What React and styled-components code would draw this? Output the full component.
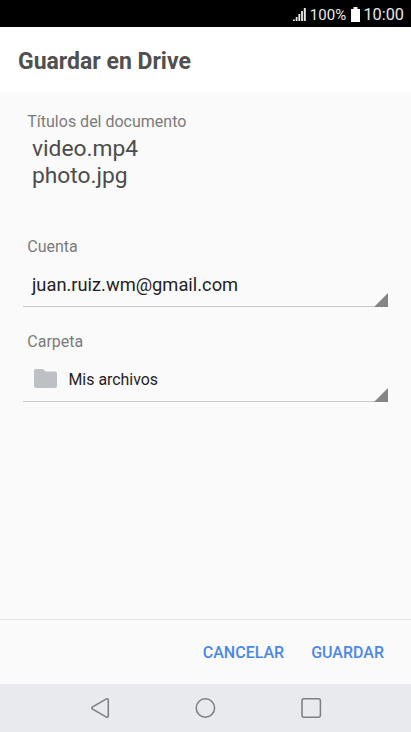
import React from "react";
import styled, { createGlobalStyle } from "styled-components";

const GlobalStyle = createGlobalStyle`
  * {
    box-sizing: border-box;
  }

  body {
    margin: 0;
    font-family: Roboto, "Liberation Sans", sans-serif;
  }
`;

const Layout = styled.div`
  display: flex;
  flex-direction: column;
  width: 100%;
  height: 100vh;
  overflow: hidden;
  background-color: #fafafa;
`;

const StatusBar = styled.div`
  display: flex;
  flex: none;
  align-items: center;
  justify-content: flex-end;
  height: 27px;
  padding: 2px 7px 0 0;
  background-color: #000;
  color: #e8e8e8;
  white-space: nowrap;

  svg {
    margin-bottom: 1px;
  }
`;

const BatteryText = styled.span`
  margin: 0 4.5px 0 3px;
  font-size: 15px;
  letter-spacing: 0.1px;
`;

const Clock = styled.span`
  margin-left: 3.5px;
  font-size: 16.3px;
`;

const Header = styled.header`
  display: flex;
  flex: none;
  align-items: center;
  height: 65px;
  padding: 4px 18px 0;
  background-color: #fff;
`;

const Title = styled.h1`
  margin: 0;
  font-size: 23px;
  font-weight: 700;
  line-height: 28px;
  color: #505050;
  white-space: nowrap;
`;

const Form = styled.main`
  flex: 1;
  padding: 20px 23px 0;
`;

const Field = styled.section`
  margin-bottom: ${(props) => props.$gap || "25px"};
`;

const Label = styled.div`
  height: 20px;
  padding-left: 4.3px;
  font-size: 16px;
  line-height: 20px;
  color: #7b7b7b;
`;

const FileList = styled.div`
  padding: 3px 0 0 9px;
  font-size: 22.8px;
  line-height: 27px;
  color: #4c4c4c;
`;

const Select = styled.div`
  display: flex;
  align-items: flex-end;
  justify-content: space-between;
  height: 50px;
  border-bottom: 1px solid #cacaca;
`;

const SelectValue = styled.div`
  display: flex;
  align-items: center;
  height: 44px;
  padding-left: ${(props) => props.$indent || "9px"};
  font-size: ${(props) => props.$size || "18.3px"};
  color: #232323;

  svg {
    margin: 0 11.5px 1px 0;
  }
`;

const Corner = styled.div`
  width: 14px;
  height: 14px;
  margin-bottom: -1px;
  background-color: #858585;
  clip-path: polygon(100% 0, 100% 100%, 0 100%);
`;

const Actions = styled.footer`
  display: flex;
  flex: none;
  align-items: center;
  justify-content: flex-end;
  gap: 27px;
  height: 65px;
  padding: 0 27px 0 0;
  border-top: 1px solid #e6e6e6;
`;

const ActionButton = styled.button`
  padding: 0;
  border: none;
  background-color: transparent;
  font-family: inherit;
  font-size: 16px;
  font-weight: 500;
  color: #4a88e8;
  cursor: pointer;
`;

const NavBar = styled.nav`
  display: flex;
  flex: none;
  align-items: center;
  justify-content: center;
  gap: 84px;
  height: 48px;
  padding-right: 1px;
  background-color: #e9eaed;
`;

const NavIcon = styled.svg`
  width: 22px;
  height: 22px;
  fill: none;
  stroke: #7d7e81;
  stroke-width: 1.5;
  stroke-linejoin: round;
`;

const SignalIcon = () => (
  <svg width="14" height="14" viewBox="0 0 14 14" fill="#e8e8e8">
    <rect x="0" y="12.5" width="1.8" height="1.5" />
    <rect x="2.7" y="10" width="1.8" height="4" />
    <rect x="5.4" y="7" width="1.8" height="7" />
    <rect x="8.1" y="4" width="1.8" height="10" />
    <rect x="10.8" y="1" width="2" height="13" />
  </svg>
);

const BatteryIcon = () => (
  <svg width="9" height="15" viewBox="0 0 9 15" fill="#fff">
    <path d="M2.5 0h4v2H9v13H0V2h2.5z" />
  </svg>
);

const FolderIcon = () => (
  <svg width="23" height="19" viewBox="0 0 23 19" fill="#bdc1c6">
    <path d="M2 0h7l2.5 2.4H21a2 2 0 0 1 2 2V17a2 2 0 0 1-2 2H2a2 2 0 0 1-2-2V2a2 2 0 0 1 2-2z" />
  </svg>
);

const files = ["video.mp4", "photo.jpg"];

export default function App() {
  return (
    <>
      <GlobalStyle />
      <Layout>
        <StatusBar>
          <SignalIcon />
          <BatteryText>100%</BatteryText>
          <BatteryIcon />
          <Clock>10:00</Clock>
        </StatusBar>
        <Header>
          <Title>Guardar en Drive</Title>
        </Header>
        <Form>
          <Field $gap="48px">
            <Label>Títulos del documento</Label>
            <FileList>
              {files.map((name) => (
                <div key={name}>{name}</div>
              ))}
            </FileList>
          </Field>
          <Field>
            <Label>Cuenta</Label>
            <Select>
              <SelectValue>juan.ruiz.wm@gmail.com</SelectValue>
              <Corner />
            </Select>
          </Field>
          <Field>
            <Label>Carpeta</Label>
            <Select>
              <SelectValue $indent="11px" $size="15.9px">
                <FolderIcon />
                Mis archivos
              </SelectValue>
              <Corner />
            </Select>
          </Field>
        </Form>
        <Actions>
          <ActionButton>CANCELAR</ActionButton>
          <ActionButton>GUARDAR</ActionButton>
        </Actions>
        <NavBar>
          <NavIcon viewBox="0 0 22 22">
            <path d="M18.4 1.9 4.6 9.8Q3 11 4.6 12.2L18.4 20.1Q20.3 20.8 20.3 19V3Q20.3 1.2 18.4 1.9z" />
          </NavIcon>
          <NavIcon viewBox="0 0 22 22">
            <circle cx="11.4" cy="11" r="9.2" />
          </NavIcon>
          <NavIcon viewBox="0 0 22 22">
            <rect x="2" y="1.8" width="18.4" height="18.4" rx="2" />
          </NavIcon>
        </NavBar>
      </Layout>
    </>
  );
}
